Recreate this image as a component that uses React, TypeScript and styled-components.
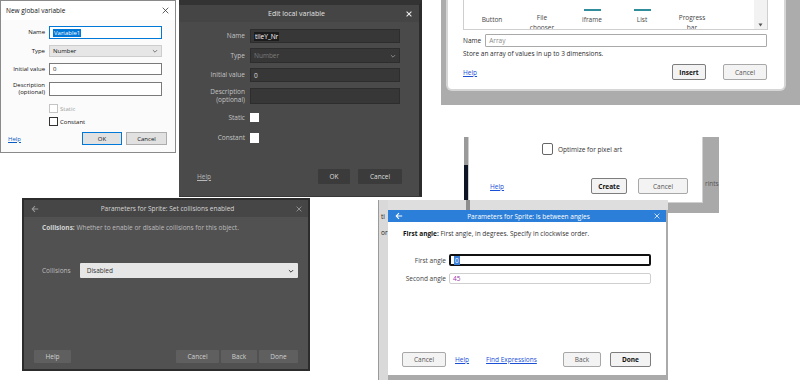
import styled, { createGlobalStyle } from 'styled-components';

const GlobalStyle = createGlobalStyle`
  html, body { margin: 0; padding: 0; background: #fff; }
  body { font-family: "Open Sans", "Noto Sans", sans-serif; }
  * { box-sizing: border-box; }
`;

const Canvas = styled.div`
  position: relative;
  width: 800px;
  height: 384px;
  overflow: hidden;
  background: #fff;
`;

// each screenshot of the collage sits at its own place on the canvas
const Shot = styled.div<{ $x: number; $y: number; $w: number; $h: number; $bg?: string }>`
  position: absolute;
  left: ${(p) => p.$x}px;
  top: ${(p) => p.$y}px;
  width: ${(p) => p.$w}px;
  height: ${(p) => p.$h}px;
  background: ${(p) => p.$bg ?? 'transparent'};
  overflow: hidden;
`;

const Link = styled.span<{ $color?: string; $ml?: number }>`
  color: ${(p) => p.$color ?? '#1a4fd6'};
  margin-left: ${(p) => p.$ml ?? 0}px;
  text-decoration: underline;
  white-space: nowrap;
`;

const Cross = ({ size = 7, color = '#222', width = 1 }: { size?: number; color?: string; width?: number }) => (
  <svg width={size} height={size} viewBox="0 0 10 10">
    <path d="M1 1 L9 9 M9 1 L1 9" stroke={color} strokeWidth={width * 1.4} fill="none" />
  </svg>
);

const Chevron = ({ color = '#666', size = 6 }: { color?: string; size?: number }) => (
  <svg width={size} height={size} viewBox="0 0 10 10">
    <path d="M1.5 3.5 L5 7 L8.5 3.5" stroke={color} strokeWidth="1.6" fill="none" />
  </svg>
);

const BackArrow = ({ color = '#fff' }: { color?: string }) => (
  <svg width="8" height="8" viewBox="0 0 10 10">
    <path d="M9 5 H1.5 M5 1.5 L1.5 5 L5 8.5" stroke={color} strokeWidth="1.3" fill="none" />
  </svg>
);

/* ---------- New global variable (Windows style) ---------- */

const WinDialog = styled.div`
  height: 100%;
  display: flex;
  flex-direction: column;
  background: #fbfbfb;
  border: 1px solid #8a8a8a;
  box-shadow: 1px 1px 2px rgba(0, 0, 0, 0.35);
  font-size: 6px;
  color: #111;
`;

const WinTitle = styled.div`
  height: 19px;
  display: flex;
  align-items: center;
  justify-content: space-between;
  padding: 0 6px 0 5px;
  background: #fff;
  font-size: 6.5px;
`;

const WinRow = styled.div<{ $mt: number; $h: number }>`
  display: grid;
  grid-template-columns: 44px 113px;
  column-gap: 4px;
  align-items: center;
  margin-top: ${(p) => p.$mt}px;
  height: ${(p) => p.$h}px;
`;

const WinLabel = styled.div`
  text-align: right;
  line-height: 7px;
`;

const WinInput = styled.div<{ $focus?: boolean; $select?: boolean }>`
  height: 100%;
  display: flex;
  align-items: center;
  justify-content: space-between;
  padding: 0 3px;
  background: ${(p) => (p.$select ? '#e6e6e6' : '#fff')};
  border: 1px solid ${(p) => (p.$focus ? '#0078d7' : p.$select ? '#cdcdcd' : '#7a7a7a')};
`;

const Selected = styled.span<{ $bg?: string }>`
  background: ${(p) => p.$bg ?? '#0078d7'};
  color: #fff;
  padding: 0 1px;
`;

const WinCheck = styled.div<{ $disabled?: boolean }>`
  display: flex;
  align-items: center;
  gap: 2px;
  height: 100%;
  color: ${(p) => (p.$disabled ? '#a0a0a0' : '#111')};

  &::before {
    content: '';
    width: 7px;
    height: 7px;
    background: #fff;
    border: 1px solid ${(p) => (p.$disabled ? '#c4c4c4' : '#333')};
  }
`;

const WinFooter = styled.div`
  display: flex;
  align-items: center;
  gap: 4px;
  margin-top: 8px;
  height: 13px;
  padding: 0 8px 0 7px;
`;

const WinButton = styled.div<{ $w: number; $default?: boolean }>`
  width: ${(p) => p.$w}px;
  height: 100%;
  display: flex;
  align-items: center;
  justify-content: center;
  background: #e1e1e1;
  border: 1px solid ${(p) => (p.$default ? '#0078d7' : '#adadad')};
  &:first-of-type { margin-left: auto; }
`;

/* ---------- Edit local variable (dark) ---------- */

const DarkWin = styled.div`
  height: 100%;
  display: flex;
  flex-direction: column;
  background: #4a4a4a;
  border-top: 5px solid #333;
  border-right: 3px solid #2c2c2c;
  border-bottom: 1px solid #383838;
  color: #cfcfcf;
  font-size: 6.5px;
`;

const DarkTitle = styled.div`
  height: 17px;
  display: flex;
  align-items: center;
  background: #454545;
  padding: 0 7px 0 0;
  color: #e2e2e2;
  font-size: 7px;

  span { flex: 1; text-align: center; padding-left: 8px; }
`;

const DarkRow = styled.div<{ $mt: number; $h: number }>`
  display: grid;
  grid-template-columns: 66px 150px;
  column-gap: 5px;
  align-items: center;
  margin-top: ${(p) => p.$mt}px;
  height: ${(p) => p.$h}px;
`;

const DarkLabel = styled.div`
  text-align: right;
  line-height: 8px;
  color: #c4c4c4;
`;

const DarkInput = styled.div<{ $muted?: boolean }>`
  height: 100%;
  display: flex;
  align-items: center;
  justify-content: space-between;
  padding: 0 3px;
  background: #373737;
  border: 1px solid #2d2d2d;
  color: ${(p) => (p.$muted ? '#7c7c7c' : '#dcdcdc')};
`;

const DarkBox = styled.div`
  width: 9px;
  height: 100%;
  background: #fff;
`;

const DarkFooter = styled.div`
  display: flex;
  align-items: center;
  gap: 8px;
  margin-top: 26px;
  height: 15px;
  padding: 0 17px 0 18px;
`;

const DarkButton = styled.div<{ $w: number; $bg?: string; $color?: string }>`
  width: ${(p) => p.$w}px;
  height: 100%;
  display: flex;
  align-items: center;
  justify-content: center;
  background: ${(p) => p.$bg ?? '#3b3b3b'};
  color: ${(p) => p.$color ?? '#ddd'};
  border-radius: 1px;
`;

const Spacer = styled.div`
  flex: 1;
`;

/* ---------- Insert object dialog (light, web) ---------- */

const Backdrop = styled.div<{ $bg?: string }>`
  height: 100%;
  display: flex;
  background: ${(p) => p.$bg ?? '#acacac'};
`;

const WebDialog = styled.div<{ $w: number; $h: number; $ml: number }>`
  width: ${(p) => p.$w}px;
  height: ${(p) => p.$h}px;
  margin-left: ${(p) => p.$ml}px;
  display: flex;
  flex-direction: column;
  background: #fff;
  border-radius: 0 0 4px 4px;
  box-shadow: 0 0 0 2px #d6d6d6;
  font-size: 6.5px;
  color: #2c2c2c;
`;

const ObjectList = styled.div`
  margin: 0 16px 0 15px;
  height: 30px;
  flex-shrink: 0;
  display: flex;
  border: 1px solid #cfcfcf;
  border-top: none;
  overflow: hidden;
`;

const ObjectItems = styled.div`
  flex: 1;
  display: flex;
  padding-left: 3px;
`;

const ObjectItem = styled.div<{ $icon?: boolean }>`
  width: 50px;
  display: flex;
  flex-direction: column;
  align-items: center;
  padding-top: 9px;
  line-height: 10px;
  text-align: center;
  color: #444;

  &::before {
    content: '';
    width: 17px;
    height: 2px;
    margin-bottom: 4px;
    background: ${(p) => (p.$icon ? '#2f8d9c' : 'transparent')};
  }
`;

const ScrollTrack = styled.div`
  width: 13px;
  background: #f2f2f2;
  display: flex;
  align-items: flex-end;
  justify-content: center;
  padding-bottom: 2px;
`;

const WebRow = styled.div`
  display: flex;
  align-items: center;
  gap: 4px;
  margin: 4px 17px 0 15px;
  height: 13px;
`;

const WebInput = styled.div<{ $placeholder?: boolean }>`
  flex: 1;
  height: 100%;
  display: flex;
  align-items: center;
  padding: 0 3px;
  border: 1px solid #a9a9a9;
  border-radius: 1px;
  color: ${(p) => (p.$placeholder ? '#8a8a8a' : '#222')};
`;

const WebText = styled.div`
  margin: 2px 15px 0;
  line-height: 10px;
`;

const WebFooter = styled.div<{ $mt: number; $px: string; $gap: number; $h?: number }>`
  display: flex;
  align-items: center;
  gap: ${(p) => p.$gap}px;
  margin-top: ${(p) => p.$mt}px;
  padding: ${(p) => p.$px};
  height: ${(p) => p.$h ?? 16}px;
  flex-shrink: 0;
`;

const WebButton = styled.div<{ $w: number; $bold?: boolean }>`
  width: ${(p) => p.$w}px;
  height: 100%;
  display: flex;
  align-items: center;
  justify-content: center;
  border: 1px solid ${(p) => (p.$bold ? '#7d7d7d' : '#a8a8a8')};
  border-radius: 2px;
  background: #f3f3f3;
  color: ${(p) => (p.$bold ? '#111' : '#555')};
  font-weight: ${(p) => (p.$bold ? 700 : 400)};
`;

/* ---------- New sprite (cropped) ---------- */

const SideStrip = styled.div<{ $w: number; $bg: string }>`
  width: ${(p) => p.$w}px;
  flex-shrink: 0;
  background: ${(p) => p.$bg};
  display: flex;
  flex-direction: column;
`;

const NavyStrip = styled.div`
  margin-top: 28px;
  flex: 1;
  background: #0f1626;
`;

const SpritePanel = styled.div`
  width: 233px;
  height: 65px;
  display: flex;
  flex-direction: column;
  background: #fff;
  box-shadow: 0 0 0 1px #d0d0d0;
  font-size: 6.5px;
  color: #333;
`;

const CheckLine = styled.div`
  display: flex;
  align-items: center;
  gap: 5px;
  margin: 7px 0 0 73px;
  height: 10px;

  &::before {
    content: '';
    width: 9px;
    height: 10px;
    border: 1px solid #666;
    border-radius: 2px;
  }
`;

const CutText = styled.div`
  padding: 42px 0 0 3px;
  font-size: 6.5px;
  color: #555;
`;

/* ---------- Parameters (dark) ---------- */

const ParamDark = styled.div`
  height: 100%;
  display: flex;
  flex-direction: column;
  background: #515151;
  border: 2px solid #2c2c2c;
  color: #bdbdbd;
  font-size: 6.5px;
`;

const ParamTitle = styled.div<{ $bg: string; $color: string; $h: number }>`
  height: ${(p) => p.$h}px;
  flex-shrink: 0;
  display: flex;
  align-items: center;
  padding: 0 6px 0 7px;
  background: ${(p) => p.$bg};
  color: ${(p) => p.$color};
  font-size: 6.5px;

  span { flex: 1; text-align: center; }
`;

const ParamHint = styled.div<{ $mt: number; $px: number; $strong?: string }>`
  margin-top: ${(p) => p.$mt}px;
  padding: 0 ${(p) => p.$px}px;
  line-height: 10px;

  b { font-weight: 700; color: ${(p) => p.$strong ?? 'inherit'}; }
`;

const ParamRow = styled.div`
  display: flex;
  align-items: center;
  gap: 9px;
  margin: 30px 10px 0 18px;
  height: 15px;
`;

const DarkSelect = styled.div`
  flex: 1;
  height: 100%;
  display: flex;
  align-items: center;
  justify-content: space-between;
  padding: 0 4px 0 7px;
  background: #e6e6e6;
  color: #333;
  border-radius: 1px;
`;

const ParamFooter = styled.div`
  display: flex;
  align-items: center;
  gap: 2px;
  margin-top: auto;
  margin-bottom: 6px;
  padding: 0 10px;
  height: 13px;
`;

/* ---------- Parameters (light, blue title) ---------- */

const BlueFrame = styled.div`
  height: 100%;
  display: grid;
  grid-template-columns: 10px 278px 2px;
  grid-template-rows: 10px 165px 5px;
  background: #aaa;
`;

const FrameTop = styled.div`
  grid-column: 2 / 4;
  background: #dedede;
  display: flex;

  &::after {
    content: '';
    margin-left: 78px;
    width: 4px;
    background: #8d8d8d;
  }
`;

const FrameLeft = styled.div`
  grid-row: 1 / 4;
  background: #d9d9d9;
  border-left: 1px solid #9a9a9a;
  font-size: 6.5px;
  color: #222;
  padding: 9px 0 0 2px;
  line-height: 16px;
  overflow: hidden;
`;

const BlueDialog = styled.div`
  display: flex;
  flex-direction: column;
  background: #fff;
  font-size: 6.5px;
  color: #333;
`;

const AngleGrid = styled.div`
  display: grid;
  grid-template-columns: 43px 202px;
  column-gap: 3px;
  row-gap: 7px;
  align-items: center;
  margin: 15px 0 0 15px;
  color: #444;
`;

const AngleLabel = styled.div`
  text-align: right;
`;

const AngleInput = styled.div<{ $focus?: boolean; $h: number }>`
  height: ${(p) => p.$h}px;
  display: flex;
  align-items: center;
  padding: 0 3px;
  border: ${(p) => (p.$focus ? '2px solid #111' : '1px solid #cfcfcf')};
  border-radius: 2px;
  color: #9b2fa6;
`;

export default function App() {
  return (
    <>
      <GlobalStyle />
      <Canvas>
        <Shot $x={0} $y={0} $w={176} $h={153}>
          <WinDialog>
            <WinTitle>
              New global variable
              <Cross size={7} color="#333" width={0.8} />
            </WinTitle>
            <WinRow $mt={6} $h={13}>
              <WinLabel>Name</WinLabel>
              <WinInput $focus>
                <span>
                  <Selected>Variable1</Selected>
                </span>
              </WinInput>
            </WinRow>
            <WinRow $mt={6} $h={12}>
              <WinLabel>Type</WinLabel>
              <WinInput $select>
                Number
                <Chevron color="#777" />
              </WinInput>
            </WinRow>
            <WinRow $mt={6} $h={12}>
              <WinLabel>Initial value</WinLabel>
              <WinInput>0</WinInput>
            </WinRow>
            <WinRow $mt={7} $h={14}>
              <WinLabel>
                Description
                <br />
                (optional)
              </WinLabel>
              <WinInput />
            </WinRow>
            <WinRow $mt={8} $h={7}>
              <span />
              <WinCheck $disabled>Static</WinCheck>
            </WinRow>
            <WinRow $mt={6} $h={7}>
              <span />
              <WinCheck>Constant</WinCheck>
            </WinRow>
            <WinFooter>
              <Link $color="#0b5bc4">Help</Link>
              <WinButton $w={40} $default>
                OK
              </WinButton>
              <WinButton $w={41}>Cancel</WinButton>
            </WinFooter>
          </WinDialog>
        </Shot>

        <Shot $x={179} $y={0} $w={243} $h={197}>
          <DarkWin>
            <DarkTitle>
              <span>Edit local variable</span>
              <Cross size={6} color="#f0f0f0" width={1.2} />
            </DarkTitle>
            <DarkRow $mt={7} $h={14}>
              <DarkLabel>Name</DarkLabel>
              <DarkInput>
                <span>
                  <Selected $bg="#1c1c1c">tileY_Nr</Selected>
                </span>
              </DarkInput>
            </DarkRow>
            <DarkRow $mt={5} $h={15}>
              <DarkLabel>Type</DarkLabel>
              <DarkInput $muted>
                Number
                <Chevron color="#8a8a8a" />
              </DarkInput>
            </DarkRow>
            <DarkRow $mt={5} $h={14}>
              <DarkLabel>Initial value</DarkLabel>
              <DarkInput>0</DarkInput>
            </DarkRow>
            <DarkRow $mt={6} $h={15}>
              <DarkLabel>
                Description
                <br />
                (optional)
              </DarkLabel>
              <DarkInput />
            </DarkRow>
            <DarkRow $mt={10} $h={9}>
              <DarkLabel>Static</DarkLabel>
              <DarkBox />
            </DarkRow>
            <DarkRow $mt={11} $h={10}>
              <DarkLabel>Constant</DarkLabel>
              <DarkBox />
            </DarkRow>
            <DarkFooter>
              <Link $color="#b8b8b8">Help</Link>
              <Spacer />
              <DarkButton $w={32}>OK</DarkButton>
              <DarkButton $w={44}>Cancel</DarkButton>
            </DarkFooter>
          </DarkWin>
        </Shot>

        <Shot $x={441} $y={0} $w={359} $h={105}>
          <Backdrop>
            <WebDialog $w={336} $h={89} $ml={7}>
              <ObjectList>
                <ObjectItems>
                  <ObjectItem>Button</ObjectItem>
                  <ObjectItem $icon>
                    File
                    <br />
                    chooser
                  </ObjectItem>
                  <ObjectItem $icon>iframe</ObjectItem>
                  <ObjectItem $icon>List</ObjectItem>
                  <ObjectItem>
                    Progress
                    <br />
                    bar
                  </ObjectItem>
                </ObjectItems>
                <ScrollTrack>
                  <svg width="5" height="4" viewBox="0 0 10 8">
                    <path d="M1 1 H9 L5 7 Z" fill="#555" />
                  </svg>
                </ScrollTrack>
              </ObjectList>
              <WebRow>
                Name
                <WebInput $placeholder>Array</WebInput>
              </WebRow>
              <WebText>Store an array of values in up to 3 dimensions.</WebText>
              <WebFooter $mt={5} $px="0 17px 0 15px" $gap={17}>
                <Link>Help</Link>
                <Spacer />
                <WebButton $w={34} $bold>
                  Insert
                </WebButton>
                <WebButton $w={44}>Cancel</WebButton>
              </WebFooter>
            </WebDialog>
          </Backdrop>
        </Shot>

        <Shot $x={464} $y={137} $w={255} $h={76}>
          <Backdrop $bg="#a9a9a9">
            <SideStrip $w={5} $bg="#9a9a9a">
              <NavyStrip />
            </SideStrip>
            <SpritePanel>
              <CheckLine>Optimize for pixel art</CheckLine>
              <WebFooter $mt={24} $px="0 14px 0 21px" $gap={11}>
                <Link>Help</Link>
                <Spacer />
                <WebButton $w={36} $bold>
                  Create
                </WebButton>
                <WebButton $w={50}>Cancel</WebButton>
              </WebFooter>
            </SpritePanel>
            <CutText>rints</CutText>
          </Backdrop>
        </Shot>

        <Shot $x={22} $y={198} $w={288} $h={173}>
          <ParamDark>
            <ParamTitle $bg="#464646" $color="#d6d6d6" $h={17}>
              <BackArrow color="#9a9a9a" />
              <span>Parameters for Sprite: Set collisions enabled</span>
              <Cross size={6} color="#a8a8a8" width={0.9} />
            </ParamTitle>
            <ParamHint $mt={6} $px={18} $strong="#d4d4d4">
              <b>Collisions:</b> Whether to enable or disable collisions for this object.
            </ParamHint>
            <ParamRow>
              Collisions
              <DarkSelect>
                Disabled
                <Chevron color="#333" />
              </DarkSelect>
            </ParamRow>
            <ParamFooter>
              <DarkButton $w={37} $bg="#5f5f5f" $color="#cfcfcf">
                Help
              </DarkButton>
              <Spacer />
              <DarkButton $w={43} $bg="#5f5f5f" $color="#cfcfcf">
                Cancel
              </DarkButton>
              <DarkButton $w={36} $bg="#5f5f5f" $color="#cfcfcf">
                Back
              </DarkButton>
              <DarkButton $w={39} $bg="#5f5f5f" $color="#cfcfcf">
                Done
              </DarkButton>
            </ParamFooter>
          </ParamDark>
        </Shot>

        <Shot $x={378} $y={200} $w={290} $h={180}>
          <BlueFrame>
            <FrameLeft>
              ti
              <br />
              or
            </FrameLeft>
            <FrameTop />
            <BlueDialog>
              <ParamTitle $bg="#2b7fd8" $color="#fff" $h={12}>
                <BackArrow />
                <span>Parameters for Sprite: Is between angles</span>
                <Cross size={6} color="#fff" width={0.9} />
              </ParamTitle>
              <ParamHint $mt={7} $px={15} $strong="#111">
                <b>First angle:</b> First angle, in degrees. Specify in clockwise order.
              </ParamHint>
              <AngleGrid>
                <AngleLabel>First angle</AngleLabel>
                <AngleInput $focus $h={12}>
                  <Selected $bg="#3b7fd6">0</Selected>
                </AngleInput>
                <AngleLabel>Second angle</AngleLabel>
                <AngleInput $h={11}>45</AngleInput>
              </AngleGrid>
              <WebFooter $mt={68} $px="0 15px 0 14px" $gap={9} $h={15}>
                <WebButton $w={44}>Cancel</WebButton>
                <Link>Help</Link>
                <Link $ml={8}>Find Expressions</Link>
                <Spacer />
                <WebButton $w={38}>Back</WebButton>
                <WebButton $w={41} $bold>
                  Done
                </WebButton>
              </WebFooter>
            </BlueDialog>
          </BlueFrame>
        </Shot>
      </Canvas>
    </>
  );
}
